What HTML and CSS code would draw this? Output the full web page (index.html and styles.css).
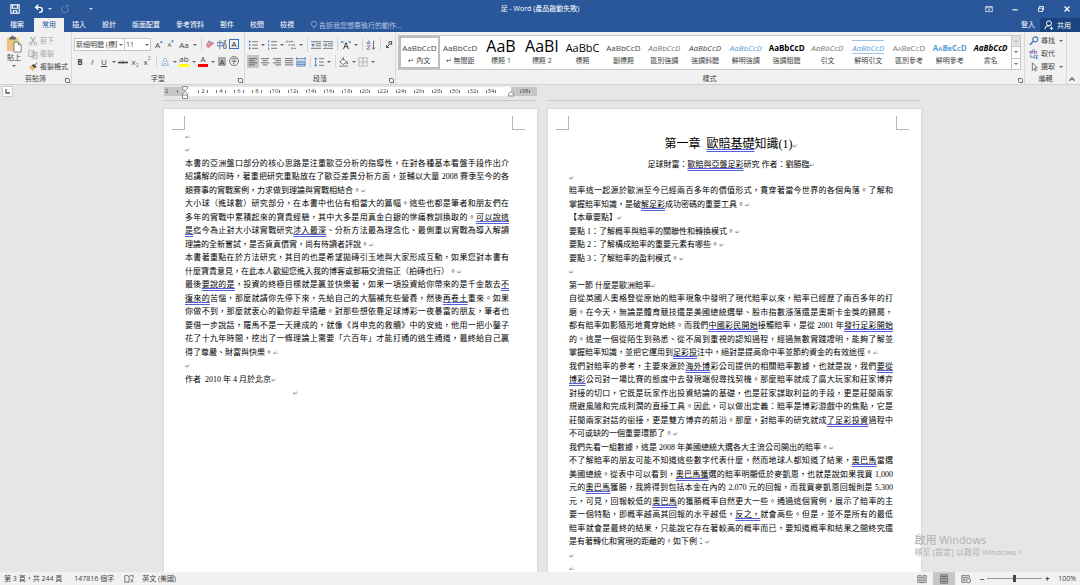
FILE: index.html
```html
<!DOCTYPE html>
<html lang="zh-Hant">
<head>
  <meta charset="UTF-8" />
  <meta name="viewport" content="width=device-width, initial-scale=1" />
  <title>足 - Word (產品啟動失敗)</title>
  <link rel="stylesheet" href="styles.css">
</head>

<body>
  <!-- TITLE BAR -->
  <header class="titlebar">
    <div class="quick">
      <button aria-label="儲存"><svg viewBox="0 0 12 12"><path d="M1 1h10v10H1z M3 1v4h6V1 M4 11V8h4v3" fill="none" stroke="#fff" stroke-width="1.3"/></svg></button>
      <button aria-label="復原"><svg viewBox="0 0 12 12"><path d="M5 1 2 4l3 3M2 4h5q3 0 3 3t-3 3H6" fill="none" stroke="#fff" stroke-width="1.6"/></svg></button>
      <button class="caret" aria-label="復原清單"></button>
      <button class="dim" aria-label="重複"><svg viewBox="0 0 12 12"><path d="M4 3a4 4 0 1 0 5 1M6 3h3V0" fill="none" stroke="#fff" stroke-width="1.2"/></svg></button>
      <button class="caret more" aria-label="自訂快速存取"></button>
    </div>
    <h1>足 - Word (產品啟動失敗)</h1>
    <div class="window-buttons">
      <button aria-label="功能區顯示選項"><svg viewBox="0 0 12 12"><path d="M2 3h8v6H2z M2 4.5h8 M6 8V6M5 7l1-1 1 1" fill="none" stroke="#fff" stroke-width=".8"/></svg></button>
      <button aria-label="最小化"><svg viewBox="0 0 12 12"><path d="M3 7h6" stroke="#fff" stroke-width="1.4"/></svg></button>
      <button aria-label="還原"><svg viewBox="0 0 12 12"><path d="M3 5h5v4H3z M4 5V3h5v4H8" fill="none" stroke="#fff"/></svg></button>
      <button aria-label="關閉"><svg viewBox="0 0 12 12"><path d="m3 3 6 6m0-6L3 9" stroke="#fff" stroke-width="1.5"/></svg></button>
    </div>
  </header>

  <!-- TABS -->
  <nav class="tabs">
    <a href="#">檔案</a>
    <a href="#" class="active">常用</a>
    <a href="#">插入</a>
    <a href="#">設計</a>
    <a href="#">版面配置</a>
    <a href="#">參考資料</a>
    <a href="#">郵件</a>
    <a href="#">校閱</a>
    <a href="#">檢視</a>
    <a href="#" class="tell"><svg viewBox="0 0 12 12"><path d="M4 8Q2 6 2 4a4 3.500 0 0 1 8 0q0 2-2 4zM4.500 10h3" fill="none" stroke="#b4c6e2"/></svg>告訴我您想要執行的動作...</a>
    <a href="#" class="login">登入</a>
    <a href="#" class="share"><svg viewBox="0 0 12 12"><path d="M1 11q0-4 4-4h2M9 8v4M7 10h4" fill="none" stroke="#fff" stroke-width="1.2"/><circle cx="6" cy="4" r="3" fill="none" stroke="#fff" stroke-width="1.2"/></svg>共用</a>
  </nav>

  <!-- RIBBON -->
  <section class="ribbon">
    <div class="group clipboard">
      <div class="tools">
        <button class="paste">
          <svg viewBox="0 0 18 20"><path d="M1 3h13v15H1z" fill="#eac282"/><path d="M4 2h2q1-3 3 0h2v3H4z" fill="#666"/><path d="M9 8h5l3 3v8H9z" fill="#fff" stroke="#777"/><path d="M14 8v3h3" fill="none" stroke="#777"/></svg>
          貼上
          <span class="caret"></span>
        </button>
        <div class="stack">
          <button class="off"><svg viewBox="0 0 12 12"><path d="m3 1 5 7M9 1 4 8" stroke="#aaa" stroke-width="1.3"/><circle cx="3" cy="9.5" r="1.7" fill="none" stroke="#aaa"/><circle cx="9" cy="9.5" r="1.7" fill="none" stroke="#aaa"/></svg>剪下</button>
          <button class="off"><svg viewBox="0 0 12 12"><path d="M1 2h6v7H1zM5 4h6v7H5zM6 6h4M6 8h4" fill="#eee" stroke="#aaa"/></svg>複製</button>
          <button><svg viewBox="0 0 12 12"><path d="m1 6 4-2 3 3-2 4z" fill="#e9b667"/><path d="m5 4 2-1 3 3-2 1zM8 4l3-3" fill="#444" stroke="#444"/></svg>複製格式</button>
        </div>
      </div>
      <div class="name">剪貼簿</div>
      <span class="launcher"></span>
    </div>

    <div class="group font">
      <div class="row">
        <label class="drop face"><select aria-label="字型"><option>新細明體 (標題)</option></select><span class="caret"></span></label>
        <label class="drop size"><select aria-label="字型大小"><option>11</option></select><span class="caret"></span></label>
        <button>A<sup class="blue">▴</sup></button>
        <button class="small">A<sup class="blue">▾</sup></button>
        <button class="wide">Aa</button><button class="caret" aria-label="大小寫"></button>
        <i class="sep"></i>
        <button aria-label="清除格式"><svg viewBox="0 0 12 12"><path d="m1 7 3 3 6-5-3-3z" fill="#e58a9b"/><path d="M2 6 5 1l2 4M8 2l3 3" fill="none" stroke="#7a5b91"/></svg></button>
        <button aria-label="注音標示"><svg viewBox="0 0 12 12"><path d="M0 3h7v4H0zM3.500 0v11" fill="none" stroke="#3b74b5"/><path d="M8 1h3L8 4h3M8 6h3v4H8z" fill="none" stroke="#555"/></svg></button>
        <button class="boxed">A</button>
      </div>
      <div class="row">
        <button><b>B</b></button>
        <button><em>I</em></button>
        <button><u>U</u></button><button class="caret" aria-label="底線"></button>
        <button class="small"><s>abc</s></button>
        <button>x<sub class="blue">2</sub></button>
        <button>x<sup class="blue">2</sup></button>
        <i class="sep"></i>
        <button class="glow">A</button><button class="caret" aria-label="文字效果"></button>
        <button class="mark">ab</button><button class="caret" aria-label="醒目提示"></button>
        <button class="color">A</button><button class="caret" aria-label="字型色彩"></button>
        <button class="shade">A</button>
        <button class="ring">字</button>
      </div>
      <div class="name">字型</div>
      <span class="launcher"></span>
    </div>

    <div class="group para">
      <div class="row">
        <button aria-label="項目符號"><svg viewBox="0 0 12 12"><path d="M1 1h2v2H1zM1 5h2v2H1zM1 9h2v2H1z" fill="#3b74b5"/><path d="M5 2h7M5 6h7M5 10h7" stroke="#666"/></svg></button><button class="caret" aria-label="項目符號清單"></button>
        <button aria-label="編號"><svg viewBox="0 0 12 12"><path d="M2 0v3M2 4.500v3M2 9v3" stroke="#3b74b5"/><path d="M5 2h7M5 6h7M5 10h7" stroke="#666"/></svg></button><button class="caret" aria-label="編號清單"></button>
        <button aria-label="多層次清單"><svg viewBox="0 0 12 12"><path d="M1 1v2M4 5v2M7 9v2" stroke="#3b74b5" stroke-width="1.5"/><path d="M3 2h6M6 6h5M9 10h3" stroke="#666"/></svg></button><button class="caret" aria-label="多層次清單選項"></button>
        <i class="sep"></i>
        <button aria-label="減少縮排"><svg viewBox="0 0 12 12"><path d="M0 2h12M6 4.500h6M6 7h6M0 10h12" stroke="#666"/><path d="M5 6H1M3 4 1 6l2 2" fill="none" stroke="#3b74b5" stroke-width="1.2"/></svg></button>
        <button aria-label="增加縮排"><svg viewBox="0 0 12 12"><path d="M0 2h12M6 4.500h6M6 7h6M0 10h12" stroke="#666"/><path d="M0 6h4M3 4l2 2-2 2" fill="none" stroke="#3b74b5" stroke-width="1.2"/></svg></button>
        <i class="sep"></i>
        <button aria-label="亞洲配置"><svg viewBox="0 0 12 12"><path d="m3 11 3-8 3 8M4 8h4" fill="none" stroke="#444" stroke-width="1.2"/><path d="m0 1 3 3M0 4l3-3M9 1l3 3M9 4l3-3" stroke="#3b74b5"/></svg></button><button class="caret" aria-label="亞洲配置選項"></button>
        <i class="sep"></i>
        <button aria-label="排序"><svg viewBox="0 0 12 12"><path d="m1 5 2-4 2 4M2 4h2" fill="none" stroke="#3b74b5"/><path d="M1 7h4l-4 4h4" fill="none" stroke="#8a5aa8"/><path d="M9 1v10M7 9l2 2 2-2" fill="none" stroke="#555"/></svg></button>
        <i class="sep"></i>
        <button aria-label="顯示編輯標記"><svg viewBox="0 0 12 12"><path d="M10 2H6v3h4M9 2v3M6 6 3 9M3 6v3h3" fill="none" stroke="#555" stroke-width="1.2"/></svg></button>
      </div>
      <div class="row">
        <button class="on" aria-label="靠左對齊"><svg viewBox="0 0 12 12"><path d="M1 2h10M1 4.500h7M1 7h10M1 9.500h7" stroke="#555"/></svg></button>
        <button aria-label="置中"><svg viewBox="0 0 12 12"><path d="M1 2h10M3 4.500h6M1 7h10M3 9.500h6" stroke="#555"/></svg></button>
        <button aria-label="靠右對齊"><svg viewBox="0 0 12 12"><path d="M1 2h10M4 4.500h7M1 7h10M4 9.500h7" stroke="#555"/></svg></button>
        <button aria-label="左右對齊"><svg viewBox="0 0 12 12"><path d="M1 2h10M1 4.500h10M1 7h10M1 9.500h10" stroke="#555"/></svg></button>
        <button aria-label="分散對齊"><svg viewBox="0 0 12 12"><path d="M1 0v4M11 0v4M1 2h10" stroke="#3b74b5"/><path d="M1 5h10v6H1zM1 7h10M1 9h10" fill="#c9dcf0" stroke="#3b74b5" stroke-width=".8"/></svg></button>
        <i class="sep"></i>
        <button aria-label="行距"><svg viewBox="0 0 12 12"><path d="M2 1v10M0 3l2-2 2 2M0 9l2 2 2-2" fill="none" stroke="#3b74b5"/><path d="M6 2h6M6 6h6M6 10h6" stroke="#666"/></svg></button><button class="caret" aria-label="行距選項"></button>
        <i class="sep"></i>
        <button aria-label="網底"><svg viewBox="0 0 12 12"><path d="m1 6 4-4 4 4-4 3zM5 4V0" fill="#fff" stroke="#555"/><path d="M10 5q2 3 0 3.500T10 5" fill="#3b74b5"/><path d="M0 11h11" stroke="#999" stroke-width="1.5"/></svg></button><button class="caret" aria-label="網底選項"></button>
        <button aria-label="框線"><svg viewBox="0 0 12 12"><path d="M1 1h10v10H1zM6 1v10M1 6h10" fill="none" stroke="#999" stroke-dasharray="1.5 .5"/></svg></button><button class="caret" aria-label="框線選項"></button>
      </div>
      <div class="name">段落</div>
      <span class="launcher"></span>
    </div>

    <div class="group styles">
      <div class="gallery">
        <button class="picked"><span>AaBbCcD</span>↵ 內文</button>
        <button><span>AaBbCcD</span>↵ 無間距</button>
        <button class="h1"><span>AaB</span>標題 1</button>
        <button class="h1"><span>AaBl</span>標題 2</button>
        <button class="h2"><span>AaBbC</span>標題</button>
        <button><span>AaBbCcD</span>副標題</button>
        <button class="soft"><span>AaBbCcD</span>區別強調</button>
        <button class="it"><span>AaBbCcD</span>強調斜體</button>
        <button class="it sky"><span>AaBbCcD</span>鮮明強調</button>
        <button class="bold"><span>AaBbCcD</span>強調粗體</button>
        <button class="soft"><span>AaBbCcD</span>引文</button>
        <button class="it sky lined"><span>AaBbCcD</span>鮮明引文</button>
        <button class="caps"><span>AaBbCcD</span>區別參考</button>
        <button class="caps bold sky"><span>AaBbCcD</span>鮮明參考</button>
        <button class="bold it"><span>AaBbCcD</span>書名</button>
        <div class="scroll">
          <button class="caret up" aria-label="上一列"></button>
          <button class="caret" aria-label="下一列"></button>
          <button class="caret more" aria-label="其他"></button>
        </div>
      </div>
      <div class="name">樣式</div>
      <span class="launcher"></span>
    </div>

    <div class="group edit">
      <div class="stack">
        <button><svg viewBox="0 0 12 12"><circle cx="7.5" cy="4" r="3" fill="none" stroke="#3b74b5" stroke-width="1.3"/><path d="M5 6.500 1 10.500" stroke="#3b74b5" stroke-width="1.8"/></svg>尋找<span class="caret"></span></button>
        <button><svg viewBox="0 0 12 12"><path d="M4 1v4H1V3h3M6 0v5h3V3H6" fill="none" stroke="#8a5aa8"/><path d="M2 7v3h3M8 8H6v3h2M11 8H9v3h2" fill="none" stroke="#3b74b5"/></svg>取代</button>
        <button><svg viewBox="0 0 12 12"><path d="M4 1v9l2-2 2 3 1-1-2-3h3z" fill="#fff" stroke="#555"/></svg>選取<span class="caret"></span></button>
      </div>
      <div class="name">編輯</div>
    </div>

    <button class="collapse" aria-label="摺疊功能區"><svg viewBox="0 0 12 12"><path d="m3 8 3-3 3 3" fill="none" stroke="#444" stroke-width="1.5"/></svg></button>
  </section>

  <!-- DOCUMENT AREA -->
  <main>
    <button class="tab-stop" aria-label="定位點"><svg viewBox="0 0 9 9"><path d="M3 2v4h4" fill="none" stroke="#555" stroke-width="1.3"/></svg></button>

    <div class="spread rulers">
      <div class="ruler">
        <div class="out"><span>2</span></div>
        <div class="in">
          <span>2</span><span>4</span><span>6</span><span>8</span><span>10</span><span>12</span><span>14</span><span>16</span><span>18</span><span>20</span><span>22</span><span>24</span><span>26</span><span>28</span><span>30</span><span>32</span><span>34</span>
          <svg class="indent left" viewBox="0 0 6 13"><path d="M.500.500h5v2L3 5 .500 2.500zM.500 8 3 5.500 5.500 8v4.500h-5zM.500 9h5" fill="#fff" stroke="#888"/></svg>
          <svg class="indent right" viewBox="0 0 6 13"><path d="M.500 10V8L3 5.500 5.500 8v2z" fill="#fff" stroke="#888"/></svg>
        </div>
        <div class="out end"><span>38</span></div>
      </div>
      <div></div>
    </div>

    <div class="spread previous"><div></div><div></div></div>

    <div class="spread pages">
      <article class="page">
        <div class="corners"><i></i><i></i></div>
        <div class="text">
          <p><span class="last"></span></p>
          <p><span class="last"></span></p>
          <p>
            <span>本書的亞洲盤口部分的核心思路是注重歐亞分析的指導性，在對各種基本看盤手段作出介</span>
            <span>紹講解的同時，著重把研究重點放在了歐亞差異分析方面，並輔以大量 2008 賽季至今的各</span>
            <span class="last">類賽事的實戰案例，力求做到理論與實戰相結合。</span>
          </p>
          <p>
            <span>大小球（進球數）研究部分，在本書中也佔有相當大的篇幅。這些也都是筆者和朋友們在</span>
            <span>多年的實戰中累積起來的寶貴經驗，其中大多是用真金白銀的慘痛教訓換取的。<u>可以說這</u></span>
            <span><u>是</u>迄今為止對大小球實戰研究<u>涉入最深</u>、分析方法最為理念化、最側重以實戰為導入解讀</span>
            <span class="last">理論的全新嘗試，是否貨真價實，尚有待讀者評說。</span>
          </p>
          <p>
            <span>本書著重點在於方法研究，其目的也是希望拋磚引玉地與大家形成互動，如果您對本書有</span>
            <span class="last">什麼寶貴意見，在此本人歡迎您進入我的博客或郵箱交流指正（拍磚也行）。</span>
          </p>
          <p>
            <span>最後<u>要說的是</u>，投資的終極目標就是贏並快樂著，如果一項投資給你帶來的是千金散去<u>不</u></span>
            <span><u>復來的</u>苦惱，那麼就請你先停下來，先給自己的大腦補充些營養，然後<u>再卷土</u>重來。如果</span>
            <span>你做不到，那麼就衷心的勸你趁早遠離。對那些想依靠足球博彩一夜暴富的朋友，筆者也</span>
            <span>要借一步說話，羅馬不是一天建成的，就像《肖申克的救贖》中的安迪，他用一把小鑿子</span>
            <span>花了十九年時間，挖出了一條理論上需要「六百年」才能打通的逃生通道，最終給自己贏</span>
            <span class="last">得了尊嚴、財富與快樂。</span>
          </p>
          <p><span class="last"></span></p>
          <p><span class="last">作者&nbsp; 2010 年 4 月於北京</span></p>
          <p><span class="last tabbed"></span></p>
        </div>
      </article>

      <article class="page">
        <div class="corners"><i></i><i></i></div>
        <h2 class="last">第一章&nbsp; <u>歐賠基礎</u>知識(1)</h2>
        <h3 class="last">足球財富：<u>歐賠與亞盤足彩</u>研究 作者：劉勝臨</h3>
        <div class="text">
          <p><span class="last"></span></p>
          <p>
            <span>賠率這一起源於歐洲至今已經兩百多年的價值形式，貫穿著當今世界的各個角落。了解和</span>
            <span class="last">掌握賠率知識，是破<u>解足彩</u>成功密碼的重要工具。</span>
          </p>
          <p><span class="last">【本章要點】</span></p>
          <p><span class="last">要點 1：了解概率與賠率的關聯性和轉換模式。</span></p>
          <p><span class="last">要點 2：了解構成賠率的重要元素有哪些。</span></p>
          <p><span class="last">要點 3：了解賠率的盈利模式。</span></p>
          <p><span class="last"></span></p>
          <p><span class="last">第一節 什麼是歐洲賠率</span></p>
          <p>
            <span>自從英國人奧格登從原始的賠率現象中發明了現代賠率以來，賠率已經歷了兩百多年的打</span>
            <span>磨。在今天，無論是體育競技還是美國總統選舉、股市指數漲落還是奧斯卡金獎的歸屬，</span>
            <span>都有賠率如影隨形地貫穿始終。而我們<u>中國彩民開始</u>接觸賠率，是從 2001 年<u>發行足彩開始</u></span>
            <span>的。這是一個從陌生到熟悉、從不屑到重視的認知過程，經過無數實踐證明，能夠了解並</span>
            <span class="last">掌握賠率知識，並把它運用到<u>足彩投</u>注中，絕對是提高命中率並節約資金的有效途徑。</span>
          </p>
          <p>
            <span>我們對賠率的參考，主要來源於<u>海外博</u>彩公司提供的相關賠率數據，也就是說，我們<u>要從</u></span>
            <span><u>博彩</u>公司對一場比賽的態度中去發現端倪尋找契機。那麼賠率就成了廣大玩家和莊家博弈</span>
            <span>對接的切口，它既是玩家作出投資結論的基礎，也是莊家謀取利益的手段，更是莊閒兩家</span>
            <span>規避風險和完成利潤的直接工具。因此，可以做出定義：賠率是博彩游戲中的焦點，它是</span>
            <span>莊閒兩家對話的銜接，更是雙方博弈的前沿。那麼，對賠率的研究就成<u>了足彩投資</u>過程中</span>
            <span class="last">不可或缺的一個重要環節了。</span>
          </p>
          <p><span class="last">我們先看一組數據，這是 2008 年美國總統大選各大主流公司開出的賠率。</span></p>
          <p>
            <span>不了解賠率的朋友可能不知道這些數字代表什麼，然而地球人都知道了結果，<u>奧巴馬</u>當選</span>
            <span>美國總統。從表中可以看到，<u>奧巴馬獲</u>選的賠率明顯低於麥凱恩，也就是說如果我買 1,000</span>
            <span>元的<u>奧巴馬</u>獲勝，我將得到包括本金在內的 2,070 元的回報，而我買麥凱恩回報則是 5,300</span>
            <span>元，可見，回報較低的<u>奧巴馬</u>的獲勝概率自然更大一些。通過這個實例，展示了賠率的主</span>
            <span>要一個特點，即概率越高其回報的水平越低，<u>反之，</u>就會高些。但是，並不是所有的最低</span>
            <span>賠率就會是最終的結果，只能說它存在著較高的概率而已，要知道概率和結果之間終究還</span>
            <span class="last">是有著轉化和實現的距離的。如下例：</span>
          </p>
          <p><span class="last"></span></p>
          <p><span class="last"></span></p>
        </div>
      </article>
    </div>

    <div class="activate">
      <strong>啟用 Windows</strong>
      移至 [設定] 以啟用 Windows。
    </div>
  </main>

  <!-- STATUS BAR -->
  <footer class="status">
    <span>第 3 頁，共 244 頁</span>
    <span>147816 個字</span>
    <svg viewBox="0 0 12 12"><path d="M6 3v7M6 3Q4 1 1 2v8q3-1 5 0M6 3q2-2 5-1v3M8 6l3 4M11 6l-3 4" fill="none" stroke="#666"/></svg>
    <span>英文 (美國)</span>
    <div class="views">
      <button aria-label="閱讀模式"><svg viewBox="0 0 12 12"><path d="M6 3v8M1 2h4l1 1 1-1h4v8H7l-1 1-1-1H1zM2 4h3M2 6h3M2 8h3M7 4h3M7 6h3M7 8h3" fill="none" stroke="#666"/></svg></button>
      <button class="on" aria-label="整頁模式"><svg viewBox="0 0 12 12"><path d="M2 1h8v10H2zM3 3h6M3 5h6M3 7h6M3 9h6" fill="none" stroke="#555"/></svg></button>
      <button aria-label="Web 版面配置"><svg viewBox="0 0 12 12"><path d="M6 10H1V2h9v3M2 4h6M2 6h4M2 8h3" fill="none" stroke="#666"/><circle cx="9" cy="8" r="2.5" fill="none" stroke="#555"/></svg></button>
    </div>
    <div class="zoom">
      <button aria-label="縮小">−</button>
      <input type="range" min="10" max="190" value="100" aria-label="縮放">
      <button aria-label="放大">+</button>
      <span>100%</span>
    </div>
  </footer>
</body>
</html>
```
FILE: styles.css
```css
* {
  margin: 0;
  padding: 0;
  box-sizing: border-box;
}

html,
body {
  height: 100%;
  overflow: hidden;
}

body {
  display: flex;
  flex-direction: column;
  font-family: "Open Sans", "Noto Sans CJK TC", sans-serif;
  font-size: 7px;
  line-height: 10px;
  color: #444;
  background: #e6e6e6;
}

button,
select {
  font: inherit;
  color: inherit;
  background: none;
  border: 0;
  white-space: nowrap;
}

a {
  color: inherit;
  text-decoration: none;
}

svg {
  display: block;
  flex: none;
  width: 10px;
  height: 10px;
}

/* small down arrow used by every drop-down */
.caret {
  display: flex;
  align-items: center;
  justify-content: center;
  width: 7px;
  flex: none;
}

.caret::before {
  content: "";
  border: 2px solid transparent;
  border-top-color: currentColor;
  border-bottom: 0;
  opacity: 0.8;
}

.caret.up::before {
  transform: rotate(180deg);
}

.caret.more::before {
  box-shadow: 0 -2px 0 -1px currentColor;
}

/* TITLE BAR */
.titlebar {
  display: grid;
  grid-template-columns: 1fr auto 1fr;
  align-items: center;
  height: 18px;
  background: #2a579a;
  color: #fff;
}

.titlebar h1 {
  font-size: 7px;
  font-weight: 400;
}

.quick {
  display: flex;
  padding-left: 10px;
}

.quick button:nth-child(2) {
  margin-left: 14px;
}

.quick .caret {
  margin-left: 2px;
}

.quick .dim {
  margin-left: 7px;
  opacity: 0.3;
}

.quick .more {
  margin-left: 17px;
}

.window-buttons {
  display: flex;
  justify-content: flex-end;
  gap: 16px;
  padding-right: 8px;
}

/* TABS */
.tabs {
  display: flex;
  height: 14px;
  padding-left: 2px;
  background: #2a579a;
  color: #fff;
  line-height: 13px;
}

.tabs a {
  padding: 0 8px;
}

.tabs .active {
  margin-left: 2px;
  background: #f1f1f1;
  color: #2a579a;
}

.tabs .tell {
  display: flex;
  align-items: center;
  gap: 1px;
  color: #b4c6e2;
}

.tell svg {
  width: 8px;
}

.tabs .login {
  margin-left: auto;
  padding: 0 5px;
}

.tabs .share {
  display: flex;
  align-items: center;
  gap: 3px;
  padding: 0 9px 0 4px;
  background: #1a4480;
}

/* RIBBON */
.ribbon {
  display: flex;
  height: 53px;
  flex: none;
  background: #f1f1f1;
  border-bottom: 1px solid #d2d2d2;
}

.group {
  position: relative;
  display: flex;
  flex-direction: column;
  gap: 4px;
  padding: 6px 2px 0;
  border-right: 1px solid #d8d8d8;
}

.group .name {
  margin-top: auto;
  text-align: center;
}

.launcher {
  position: absolute;
  right: 2px;
  bottom: 2px;
  width: 4px;
  height: 4px;
  border-left: 1px solid #777;
  border-top: 1px solid #777;
}

.launcher::after {
  content: "";
  position: absolute;
  right: -1px;
  bottom: -1px;
  width: 3px;
  height: 3px;
  border-right: 1px solid #777;
  border-bottom: 1px solid #777;
}

.clipboard {
  width: 72px;
  gap: 0;
  padding-top: 2px;
}

.font {
  width: 173px;
}

.para {
  width: 151px;
}

.styles {
  flex: 1;
  gap: 0;
  padding: 3px 3px 0 2px;
}

.edit {
  width: 42px;
  gap: 0;
  padding-top: 2px;
}

.tools {
  display: flex;
  gap: 2px;
}

.paste {
  display: flex;
  flex-direction: column;
  align-items: center;
  width: 24px;
  padding-top: 1px;
}

.paste svg {
  width: 16px;
  height: 18px;
}

.paste .caret {
  height: 5px;
}

.stack button {
  display: flex;
  align-items: center;
  gap: 2px;
  height: 13px;
}

.off {
  color: #a6a6a6;
}

.edit .stack {
  padding-left: 2px;
}

.row {
  display: flex;
  height: 13px;
}

.row button {
  display: flex;
  align-items: center;
  justify-content: center;
  flex: none;
  width: 12px;
  font-size: 8px;
}

.row .caret {
  width: 7px;
}

.row .small {
  font-size: 6px;
}

.row .wide {
  width: 14px;
}

.row sup,
.row sub {
  font-size: 5px;
  line-height: 6px;
}

.row sup {
  align-self: flex-start;
}

.row sub {
  align-self: flex-end;
}

.blue {
  color: #3b74b5;
}

.sep {
  flex: none;
  width: 6px;
  background: linear-gradient(#d5d5d5, #d5d5d5) center / 1px 100% no-repeat;
}

.drop {
  display: flex;
  width: 51px;
  background: #fff;
  border: 1px solid #c6c6c6;
}

.drop.size {
  width: 27px;
  margin-left: -1px;
  margin-right: 2px;
}

.drop select {
  flex: 1;
  min-width: 0;
  padding-left: 1px;
  appearance: none;
  overflow: hidden;
}

.row .boxed {
  height: 10px;
  width: 10px;
  margin: 1px;
  border: 1px solid #3b74b5;
  color: #222;
}

.row .glow {
  color: #fff;
  -webkit-text-stroke: 1px #4a86c8;
  paint-order: stroke;
  font-weight: 700;
}

.row .mark,
.row .color {
  line-height: 8px;
  align-items: flex-start;
  background: linear-gradient(#ff0, #ff0) center bottom 1px / 10px 3px no-repeat;
}

.row .color {
  background-image: linear-gradient(#f00, #f00);
}

.row .shade {
  height: 9px;
  width: 8px;
  margin: 2px;
  background: #aaa;
}

.row .ring {
  width: 10px;
  height: 10px;
  margin: 1px;
  border: 1px solid #777;
  border-radius: 50%;
  font-size: 6px;
}

.on {
  background: #c5c5c5;
}

/* STYLE GALLERY */
.gallery {
  display: grid;
  grid-template-columns: repeat(15, minmax(0, 1fr)) 9px;
  height: 35px;
  background: #fff;
  border: 1px solid #c6c6c6;
}

.gallery > button {
  display: flex;
  flex-direction: column;
  align-items: center;
  overflow: hidden;
}

.gallery .picked {
  box-shadow: inset 0 0 0 2px #bdbdbd;
}

.gallery span {
  height: 20px;
  line-height: 24px;
  font-size: 8px;
}

.gallery .h1 span {
  font-size: 16px;
  line-height: 20px;
  color: #000;
}

.gallery .h2 span {
  font-size: 11px;
  color: #000;
}

.gallery .it span,
.gallery .soft span {
  font-style: italic;
}

.gallery .soft span,
.gallery .caps span {
  color: #777;
}

.gallery .bold span {
  font-weight: 700;
  color: #000;
}

.gallery .caps span {
  font-variant: small-caps;
}

.gallery .sky span {
  color: #5b9bd5;
}

.gallery .lined span {
  height: 14px;
  margin: 4px 0 2px;
  line-height: 13px;
  border-top: 1px solid #9cc3e6;
  border-bottom: 1px solid #9cc3e6;
}

.scroll {
  display: grid;
  border-left: 1px solid #c6c6c6;
}

.scroll .caret {
  width: 8px;
}

.scroll .caret + .caret {
  border-top: 1px solid #c6c6c6;
}

.scroll .up {
  background: #e1e1e1;
  color: #aaa;
}

.collapse {
  align-self: flex-end;
  margin-left: auto;
  padding-right: 3px;
}

/* DOCUMENT AREA */
main {
  position: relative;
  flex: 1;
  min-height: 0;
  overflow: hidden;
  padding: 2px 0 0 5px;
}

.spread {
  display: grid;
  grid-template-columns: 373px 373px;
  justify-content: center;
  gap: 11px;
}

.tab-stop {
  position: absolute;
  left: 2px;
  top: 1px;
  width: 11px;
  height: 11px;
  background: #fff;
  border: 1px solid #ccc;
}

.tab-stop svg {
  width: 9px;
  height: 9px;
}

.ruler {
  display: flex;
  height: 9px;
  font-size: 6px;
  line-height: 9px;
}

.ruler span {
  display: flex;
  align-items: center;
  justify-content: space-between;
  width: 18px;
  padding: 0 4px;
}

.ruler span::before,
.ruler span::after {
  content: "";
  width: 1px;
  height: 3px;
  background: #777;
}

.ruler .in {
  position: relative;
  flex: 1;
  display: flex;
  padding-left: 9px;
  background: #fff;
}

.ruler .out {
  width: 21px;
  background: #c6c6c6;
}

.ruler .end {
  width: 26px;
  padding-left: 5px;
}

.ruler .out:first-child span::before {
  display: none;
}

.ruler .out:first-child span {
  padding-left: 1px;
}

.indent {
  position: absolute;
  top: -1px;
  left: -3px;
  width: 6px;
  height: 13px;
}

.indent.right {
  left: auto;
  right: -3px;
}

/* bottom edge of the pages scrolled off above */
.previous {
  height: 5px;
  margin-bottom: 8px;
}

.previous div {
  border-bottom: 1px solid #c9c9c9;
}

.page {
  min-height: 100vh;
  background: #fff;
  box-shadow: 0 0 0 1px #dadada;
  font-family: "Liberation Serif", "Noto Sans CJK TC", serif;
  font-size: 8px;
  line-height: 13px;
  color: #000;
}

.corners {
  display: flex;
  justify-content: space-between;
  height: 21px;
  padding: 7px 12px 0 8px;
}

.corners i {
  width: 13px;
  border: solid #b5b5b5;
  border-width: 0 1px 1px 0;
}

.corners i + i {
  border-width: 0 0 1px 1px;
}

.page h2,
.page h3,
.text {
  margin: 0 28px 0 21px;
}

.page h2 {
  font-size: 12px;
  line-height: 28px;
  font-weight: 400;
  text-align: center;
}

.page h3 {
  font-size: 8px;
  font-weight: 400;
  text-align: center;
}

.text {
  display: grid;
  grid-auto-rows: 13px 14px;
}

.text p {
  display: contents;
}

.text span {
  white-space: nowrap;
  text-align: justify;
  text-align-last: justify;
}

.text .last {
  text-align-last: left;
}

/* paragraph mark */
.last::after {
  content: "↵";
  font-family: "DejaVu Sans", sans-serif;
  font-size: 6px;
  line-height: 1px;
  color: #777;
}

.text .tabbed {
  padding-left: 108px;
}

.page u {
  text-decoration: underline double #5560d8 1px;
  text-decoration-skip-ink: none;
  text-underline-offset: 1px;
}

/* ACTIVATION NOTICE */
.activate {
  position: absolute;
  right: 56px;
  bottom: 14px;
  font-size: 8px;
  line-height: 12px;
  color: #b0b0b0;
}

.activate strong {
  display: block;
  font-size: 11px;
  line-height: 12px;
  font-weight: 400;
}

/* STATUS BAR */
.status {
  display: flex;
  align-items: center;
  height: 13px;
  flex: none;
  padding: 0 4px;
  background: #f1f1f1;
}

.status > span + span {
  margin-left: 12px;
}

.status > svg {
  margin: 0 8px 0 10px;
}

.views {
  display: flex;
  margin-left: auto;
}

.views button {
  display: flex;
  align-items: center;
  justify-content: center;
  width: 22px;
  height: 13px;
}

.zoom {
  display: flex;
  align-items: center;
}

.zoom button {
  width: 10px;
  font-size: 8px;
  font-weight: 700;
}

.zoom input {
  width: 55px;
  height: 9px;
  appearance: none;
  background: linear-gradient(#999, #999) center / 100% 1px no-repeat;
}

.zoom input::-webkit-slider-thumb {
  appearance: none;
  width: 3px;
  height: 7px;
  background: #444;
}

.zoom span {
  margin-left: 6px;
}
```
